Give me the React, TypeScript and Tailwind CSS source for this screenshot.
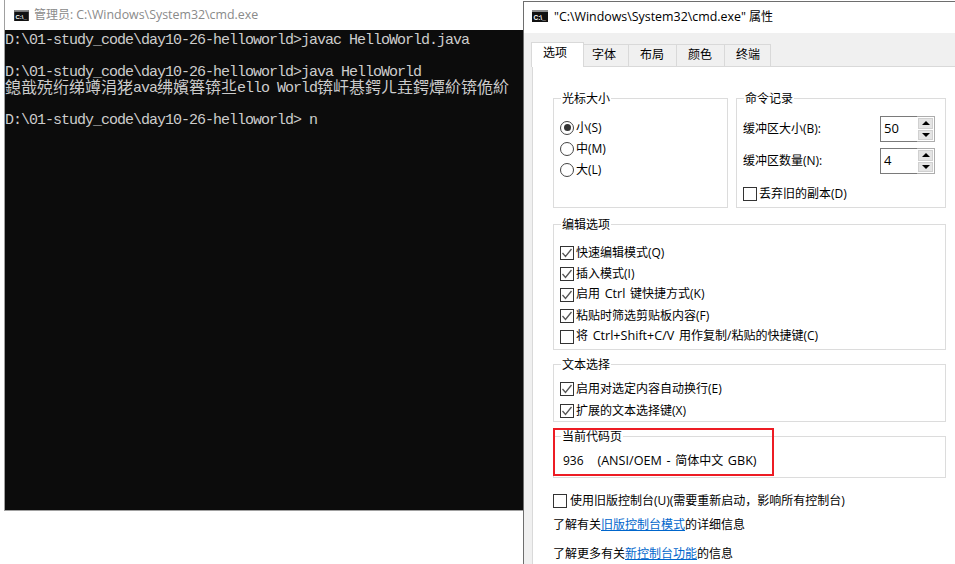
import React from 'react';

const UI_FONT = "font-['Open_Sans','Noto_Sans_CJK_SC',sans-serif]";

const CmdIcon: React.FC<{ className: string }> = ({ className }) => (
  <svg className={className} viewBox="0 0 16 12">
    <rect width="16" height="12" fill="#111" />
    <rect width="16" height="2" fill="#8c8c8c" />
    <text x="1.5" y="9.5" fontSize="6.5" fontWeight="700" fill="#fff" fontFamily="Liberation Sans, sans-serif">C:\_</text>
  </svg>
);

const Check: React.FC<{ checked?: boolean }> = ({ checked }) => (
  <span className="w-[14px] h-[14px] shrink-0 border border-[#333] bg-white flex items-center justify-center">
    {checked && (
      <svg className="w-[12px] h-[12px]" viewBox="0 0 12 12" fill="none" stroke="#555" strokeWidth="1.3">
        <path d="M1.5 6 L4.5 9.5 L10.5 2" />
      </svg>
    )}
  </span>
);

// latin runs are a touch wider in the original font
const Lat: React.FC<{ children: React.ReactNode }> = ({ children }) => (
  <span className="text-[12.6px]">{children}</span>
);

const CheckRow: React.FC<{ checked?: boolean; label: React.ReactNode }> = ({ checked, label }) => (
  <div className="h-[21px] flex items-center gap-[2px] whitespace-pre [word-spacing:1.5px]">
    <Check checked={checked} />
    <span>{label}</span>
  </div>
);

const RadioRow: React.FC<{ selected?: boolean; label: string }> = ({ selected, label }) => (
  <div className="h-[21px] flex items-center gap-[2px]">
    <span className="w-[14px] h-[14px] rounded-full border border-[#444] flex items-center justify-center">
      {selected && <span className="w-[7px] h-[7px] rounded-full bg-[#333]" />}
    </span>
    <span>{label}</span>
  </div>
);

const Group: React.FC<{ title: string; className?: string; children: React.ReactNode }> = ({ title, className, children }) => (
  <fieldset className={`border border-[#dcdcdc] px-[6px] ${className ?? ''}`}>
    <legend className="ml-[1px] px-[1px] text-[12px] h-[16px] leading-[18px]">{title}</legend>
    {children}
  </fieldset>
);

const Spinner: React.FC<{ value: string }> = ({ value }) => (
  <div className="flex h-[26px] w-[55px] border border-[#7a7a7a] bg-white">
    <div className="flex-1 pl-[3px] text-[13px] leading-[22px]">{value}</div>
    <div className="w-[18px] flex flex-col gap-[1px] border-y border-r border-[#adadad] -my-[1px] -mr-[1px] p-[1px] bg-white">
      <div className="flex-1 bg-[#e4e4e4] border border-[#d0d0d0] flex items-center justify-center">
        <span className="w-0 h-0 border-x-[4px] border-x-transparent border-b-[4px] border-b-black" />
      </div>
      <div className="flex-1 bg-[#e4e4e4] border border-[#d0d0d0] flex items-center justify-center">
        <span className="w-0 h-0 border-x-[4px] border-x-transparent border-t-[4px] border-t-black" />
      </div>
    </div>
  </div>
);

const Tab: React.FC<{ label: string; className: string }> = ({ label, className }) => (
  <div className={`h-[22px] pb-[2px] border border-b-0 border-l-0 border-[#d9d9d9] bg-[#f0f0f0] flex items-center text-[12px] ${className}`}>
    {label}
  </div>
);

const ConsoleLine: React.FC<{ children?: React.ReactNode }> = ({ children }) => (
  <div className="h-4 leading-4 whitespace-pre">{children}</div>
);

const Mono: React.FC<{ children: React.ReactNode }> = ({ children }) => (
  <span className="font-['Liberation_Mono',monospace] text-[15px] tracking-[-1px] align-[1px]">{children}</span>
);

const App: React.FC = () => {
  return (
    <div className="h-[564px] overflow-hidden bg-white flex">
      {/* cmd window */}
      <div className="ml-[4px] w-[519px] h-[511px] border-l border-b border-[#a0a0a0] flex flex-col">
        <div className={`h-[30px] shrink-0 bg-white flex items-center gap-[5px] pl-[9px] text-[12px] text-[#8a8a8a] ${UI_FONT}`}>
          <CmdIcon className="w-[15px] h-[11px]" />
          <span>管理员: <span className="text-[12.4px]">C:\Windows\System32\cmd.exe</span></span>
        </div>
        <div className="flex-1 bg-[#0c0c0c] text-[#cccccc] font-['Noto_Sans_CJK_SC',sans-serif] text-[16px]">
          <ConsoleLine><Mono>D:\01-study_code\day10-26-helloworld&gt;javac HelloWorld.java</Mono></ConsoleLine>
          <ConsoleLine />
          <ConsoleLine><Mono>D:\01-study_code\day10-26-helloworld&gt;java HelloWorld</Mono></ConsoleLine>
          <ConsoleLine>
            鎴戠殑绗绨竴涓狫<Mono>ava</Mono>绋嬪簭锛丠<Mono>ello World</Mono>锛屽惎鍔ㄦ垚鍔燂紒锛佹紒
          </ConsoleLine>
          <ConsoleLine />
          <ConsoleLine><Mono>D:\01-study_code\day10-26-helloworld&gt; n</Mono></ConsoleLine>
        </div>
      </div>

      {/* properties dialog */}
      <div className={`flex-1 mt-[1px] border-l border-t border-[#6e6e6e] flex flex-col text-[12px] text-black ${UI_FONT}`}>
        <div className="h-[31px] shrink-0 bg-white flex items-center gap-[6px] pl-[8px]">
          <CmdIcon className="w-[16px] h-[12px] mb-[3px]" />
          <span className="whitespace-nowrap"><span className="text-[12.4px]">"C:\Windows\System32\cmd.exe"</span> 属性</span>
        </div>
        <div className="flex-1 bg-[#f0f0f0] flex flex-col">
          <div className="h-[33px] shrink-0 pl-[7px] flex items-end">
            <div className="h-[25px] w-[53px] bg-white border border-b-0 border-[#d9d9d9] flex items-center justify-center pb-[4px] pr-[5px] -mb-[1px] relative">选项</div>
            <Tab label="字体" className="w-[45px] pl-[8px]" />
            <Tab label="布局" className="w-[48px] pl-[11px]" />
            <Tab label="颜色" className="w-[48px] pl-[11px]" />
            <Tab label="终端" className="w-[46px] pl-[11px]" />
          </div>
          <div className="flex-1 ml-[8px] bg-white border-l border-t border-[#d9d9d9] pt-[23px] pl-[20px] pr-[9px]">
            <div className="flex gap-[8px]">
              <Group title="光标大小" className="w-[175px] h-[118px]">
                <div className="pt-[11px]">
                  <RadioRow selected label="小(S)" />
                  <RadioRow label="中(M)" />
                  <RadioRow label="大(L)" />
                </div>
              </Group>
              <Group title="命令记录" className="flex-1 h-[118px]">
                <div className="pt-[10px] flex flex-col gap-[6px] pr-[4px]">
                  <div className="flex items-center justify-between">
                    <span>缓冲区大小(B):</span>
                    <Spinner value="50" />
                  </div>
                  <div className="flex items-center justify-between">
                    <span>缓冲区数量(N):</span>
                    <Spinner value="4" />
                  </div>
                </div>
                <div className="mt-[9px]">
                  <CheckRow label="丢弃旧的副本(D)" />
                </div>
              </Group>
            </div>

            <Group title="编辑选项" className="mt-[8px] pt-[10px] pb-[2px]">
              <CheckRow checked label="快速编辑模式(Q)" />
              <CheckRow checked label="插入模式(I)" />
              <CheckRow checked label={<>启用 <Lat>Ctrl</Lat> 键快捷方式(K)</>} />
              <CheckRow checked label="粘贴时筛选剪贴板内容(F)" />
              <CheckRow label={<>将 <Lat>Ctrl+Shift+C/V</Lat> 用作复制/粘贴的快捷键(C)</>} />
            </Group>

            <Group title="文本选择" className="mt-[6px] pt-[6px]">
              <CheckRow checked label="启用对选定内容自动换行(E)" />
              <div className="mt-[1px]">
                <CheckRow checked label="扩展的文本选择键(X)" />
              </div>
            </Group>

            <div className="relative mt-[6px]">
              <Group title="当前代码页" className="pt-[7px] pb-[5px]">
                <div className="h-[21px] flex items-center pl-[3px] whitespace-pre [word-spacing:1.5px]">
                  <span>936   <Lat>(ANSI/OEM -</Lat> 简体中文 <Lat>GBK)</Lat></span>
                </div>
              </Group>
              <div className="absolute left-0 top-0 w-[221px] h-[48px] border-2 border-[#ed1c24]" />
            </div>

            <div className="mt-[12px]">
              <div className="h-[21px] flex items-center gap-[3px] whitespace-nowrap">
                <Check />
                <span>使用旧版控制台(U)(需要重新启动，影响所有控制台)</span>
              </div>
            </div>
            <div className="mt-[3px] h-[21px] leading-[21px] whitespace-nowrap">
              了解有关<span className="text-[#0066cc] underline">旧版控制台模式</span>的详细信息
            </div>
            <div className="mt-[8px] h-[21px] leading-[21px] whitespace-nowrap">
              了解更多有关<span className="text-[#0066cc] underline">新控制台功能</span>的信息
            </div>
          </div>
        </div>
      </div>
    </div>
  );
};

export default App;
